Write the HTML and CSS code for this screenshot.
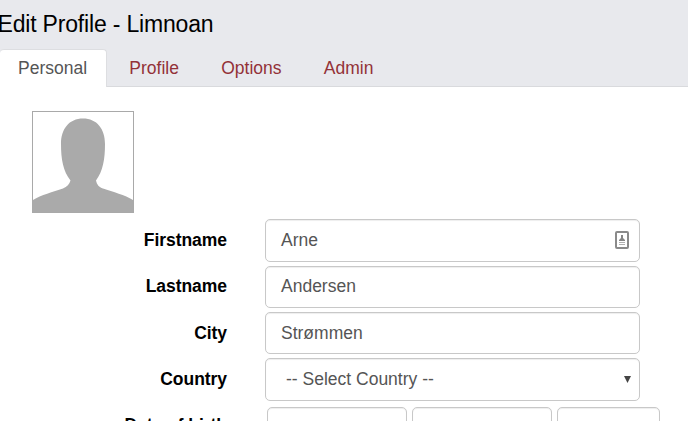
FILE: index.html
```html
<!DOCTYPE html>
<html lang="en">
<head>
<meta charset="utf-8">
<title>Edit Profile</title>
<link rel="stylesheet" href="styles.css">
</head>
<body>
<header class="header">
  <h1 class="title">Edit Profile - Limnoan</h1>
  <nav class="tabs">
    <a class="tab active">Personal</a>
    <a class="tab">Profile</a>
    <a class="tab">Options</a>
    <a class="tab">Admin</a>
  </nav>
</header>
<main class="content">
  <svg class="avatar" viewBox="0 0 102 102">
    <rect x=".5" y=".5" width="101" height="101" fill="#fff" stroke="#a9a9a9"/>
    <path fill="#aaa" d="M51 7.500C65 7.500 73 18 73 33C73 48 71 60 64 69.500C65 74 67 76 71 77.500C81 81 93 84 101 89V101H1V89C9 84 21 81 31 77.500C35 76 37.500 73 38.500 69.500C31 60 29 48 29 33C29 18 37 7.500 51 7.500Z"/>
  </svg>
  <form class="form">
    <div class="row tall"><label>Firstname</label><div class="field">Arne
      <svg class="card" viewBox="0 0 16 20"><rect x="2" y="2" width="12" height="16" rx="1" fill="#fff" stroke="#8a8a8a" stroke-width="2"/><path fill="#858585" d="M7 5h2v3l2 2v1H5v-1l2-2z"/><path d="M5 12.500h6M5 14.500h6" stroke="#b0b0b0"/></svg>
    </div></div>
    <div class="row lifted"><label>Lastname</label><div class="field">Andersen</div></div>
    <div class="row"><label>City</label><div class="field">Strømmen</div></div>
    <div class="row tall"><label>Country</label><div class="field select">-- Select Country --
      <svg class="arrow" viewBox="0 0 7 7"><path fill="#444" d="M0 0h7L3.500 7z"/></svg>
    </div></div>
    <div class="row birth"><label>Date of birth</label><div class="dates"><div class="field"></div><div class="field"></div><div class="field year"></div></div></div>
  </form>
</main>
</body>
</html>
```
FILE: styles.css
```css
* { box-sizing: border-box; }
html { overflow: hidden; }
body {
  margin: 0;
  height: 421px;
  overflow: hidden;
  background: #fff;
  color: #000;
  font: 17.5px/24px "Liberation Sans", Arial, sans-serif;
}
.header {
  height: 87px;
  background: #e8e9ed;
  border-bottom: 1px solid #d9dadd;
}
.title {
  margin: 0;
  height: 49px;
  padding-top: 10px;
  font-size: 23px;
  line-height: 28px;
  font-weight: 400;
  letter-spacing: -.18px;
  text-indent: -2.5px;
}
.tabs { display: flex; height: 38px; }
.tab {
  padding: 7px 20px 0 22.3px;
  color: #933238;
}
.active {
  width: 107px;
  padding: 6px 0 0 18px;
  color: #555;
  background: #fff;
  border: 1px solid #dddee1;
  border-width: 1px 1px 0 0;
  border-radius: 4px 4px 0 0;
}
.content { padding: 24px 0 0; }
.avatar { display: block; width: 102px; height: 102px; margin-left: 32px; }
.form { padding-top: 6px; }
.row {
  display: grid;
  grid-template-columns: 227px 375px;
  column-gap: 38px;
  height: 42px;
  margin-bottom: 4px;
}
.tall { height: 43px; }
.row label {
  align-self: center;
  text-align: right;
  font-weight: 700;
  letter-spacing: -.05px;
}
.field {
  display: flex;
  align-items: center;
  padding: 0 9px 0 15px;
  color: #555;
  border: 1px solid #c8c8c8;
  border-radius: 5px;
  box-shadow: inset 0 1px 1px #eee;
}
.tall label, .lifted label { padding-bottom: 2px; }
.tall .field, .lifted .field { padding-bottom: 2px; }
.card { width: 16px; height: 20px; margin: 1px 0 0 auto; }
.field.select { padding: 0 8px 2px 20px; }
.arrow { width: 7px; height: 7px; margin: 2px 0 0 auto; }
.birth { margin-top: 6px; margin-bottom: 0; height: 14px; }
.birth label { align-self: start; padding-top: 6px; }
.dates { display: flex; gap: 5px; margin-left: 2px; height: 42px; }
.dates .field { flex: 0 0 140px; }
.dates .year { flex-basis: 103px; }
```
